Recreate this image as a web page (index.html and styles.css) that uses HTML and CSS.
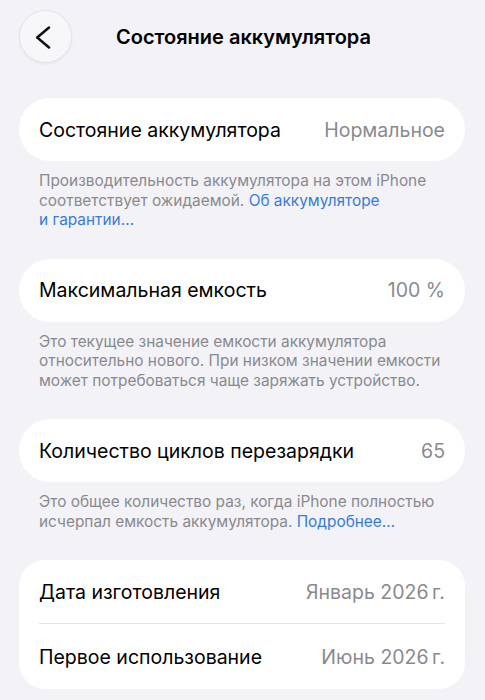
FILE: index.html
```html
<!DOCTYPE html>
<html lang="ru">
<head>
<meta charset="utf-8">
<link rel="stylesheet" href="styles.css">
</head>
<body>
<div class="page">
  <header class="nav">
    <button class="back" aria-label="Назад">
      <svg width="24" height="24" viewBox="0 0 24 24"><path d="M16 2.5 L4.2 12.5 L16 22.5" fill="none" stroke="#111" stroke-width="2.5" stroke-linecap="round" stroke-linejoin="round"/></svg>
    </button>
    <h1 class="title">Состояние аккумулятора</h1>
  </header>

  <section class="card">
    <div class="row"><span class="label">Состояние аккумулятора</span><span class="value">Нормальное</span></div>
  </section>
  <p class="note">Производительность аккумулятора на этом iPhone соответствует ожидаемой. <a class="link">Об аккумуляторе<br>и гарантии…</a></p>

  <section class="card">
    <div class="row"><span class="label">Максимальная емкость</span><span class="value">100 %</span></div>
  </section>
  <p class="note">Это текущее значение емкости аккумулятора относительно нового. При низком значении емкости может потребоваться чаще заряжать устройство.</p>

  <section class="card">
    <div class="row"><span class="label">Количество циклов перезарядки</span><span class="value">65</span></div>
  </section>
  <p class="note">Это общее количество раз, когда iPhone полностью исчерпал емкость аккумулятора. <a class="link">Подробнее…</a></p>

  <section class="card card-group">
    <div class="row"><span class="label">Дата изготовления</span><span class="value">Январь 2026&#8201;г.</span></div>
    <div class="divider"></div>
    <div class="row"><span class="label">Первое использование</span><span class="value">Июнь 2026&#8201;г.</span></div>
  </section>
</div>
</body>
</html>
```

FILE: styles.css
```css
* { box-sizing: border-box; }
html, body {
  margin: 0;
  padding: 0;
  background: #f2f2f7;
}
body {
  font-family: Inter, "Noto Sans", "Liberation Sans", sans-serif;
  color: #000;
  -webkit-font-smoothing: antialiased;
}
.page {
  padding: 10px 20px 0 19px;
}
.nav {
  display: flex;
  align-items: center;
  height: 53px;
}
.back {
  width: 53px;
  height: 53px;
  border-radius: 50%;
  border: 1px solid #e4e4ea;
  background: #f7f7fa;
  box-shadow: 0 1px 3px rgba(0,0,0,0.06);
  display: flex;
  align-items: center;
  justify-content: center;
  padding: 0 1px 0 0;
  flex: none;
}
.title {
  margin: 0 0 0 44px;
  font-size: 20px;
  font-weight: 600;
  letter-spacing: 0;
}
.card {
  background: #fff;
  border-radius: 31px;
  margin-top: 35px;
}
.row {
  height: 63px;
  display: flex;
  align-items: center;
  justify-content: space-between;
  padding: 0 20px;
  font-size: 19.5px;
}
.value { color: #8a8a8e; }
.note {
  margin: 0;
  padding: 10px 20px 29px 20px;
  font-size: 15.4px;
  line-height: 19.5px;
  color: #8a8a8e;
}
.note + .card { margin-top: 0; }
.link { color: #3a7bd5; }
.card-group {
  border-radius: 26px;
  margin-top: 3px;
}
.card-group .row:last-child { height: 65px; }
.divider {
  height: 1px;
  background: #e3e3e8;
  margin: 0 20px;
}
```
